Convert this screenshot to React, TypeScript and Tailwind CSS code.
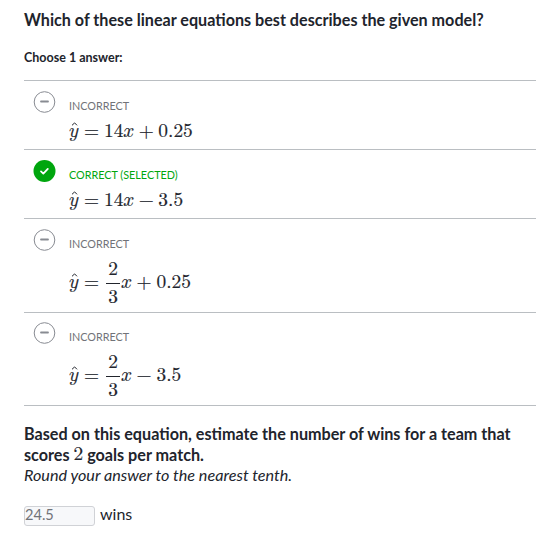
import React from "react";

const MATH = "font-['Latin_Modern_Math','Liberation_Serif',serif] text-[19.36px] leading-[24px] text-[#21242c] [-webkit-text-stroke:0.2px_#21242c]";

function YHat() {
  return (
    <span className="relative inline-block w-[10px]">
      <span className="inline-block [text-transform:math-auto]">y</span>
      <svg className="absolute left-[2px] top-[3px]" width="7" height="4" viewBox="0 0 7 4" fill="none" stroke="#21242c" strokeWidth="1">
        <path d="M1 3.3 3.6 0.9 6 3.3" />
      </svg>
    </span>
  );
}

function Equation({ fraction, op, constant }: { fraction?: boolean; op: string; constant: string }) {
  return (
    <div className={`flex items-center whitespace-nowrap ${fraction ? "h-[52px]" : "h-[24px]"} ${MATH}`}>
      <YHat />
      <span className="ml-[5px] w-[15px]">=</span>
      {fraction ? (
        <span className="ml-[7px] flex w-[14px] flex-col items-center pt-[2px]">
          <span className="h-[27px] leading-[26px]">2</span>
          <span className="h-px w-full bg-[#21242c]" />
          <span className="h-[26px] leading-[27px]">3</span>
        </span>
      ) : (
        <span className="ml-[5px]">14</span>
      )}
      <span className={`w-[11px] [text-transform:math-auto] ${fraction ? "ml-[1px]" : ""}`}>x</span>
      <span className="ml-[4.5px] w-[15px]">{op}</span>
      <span className={fraction ? "ml-[5px]" : "ml-[4.5px]"}>{constant}</span>
    </div>
  );
}

function Choice({ correct, fraction, op, constant, height }: { correct?: boolean; fraction?: boolean; op: string; constant: string; height: string }) {
  return (
    <li className={`flex border-b border-[#babec2] pl-[9px] ${height}`}>
      <svg width="23" height="23" viewBox="0 0 23 23" fill="none" className="shrink-0">
        {correct ? (
          <>
            <circle cx="11.5" cy="11" r="11" fill="#00a60e" />
            <path d="m8 11.4 2.3 2.2 4.5-4.7" stroke="white" strokeWidth="1.8" strokeLinecap="round" strokeLinejoin="round" />
          </>
        ) : (
          <>
            <circle cx="11.5" cy="11" r="10.3" stroke="#888b92" strokeWidth="1" />
            <path d="M8 10.5h7" stroke="#888b92" strokeWidth="1.8" strokeLinecap="round" />
          </>
        )}
      </svg>
      <div className="ml-[13px] pt-[7px]">
        <div className={`text-[10.8px] leading-[16px] ${correct ? "text-[#00a60e]" : "text-[#717378]"}`}>
          {correct ? "CORRECT (SELECTED)" : "INCORRECT"}
        </div>
        <div className={fraction ? "pt-[4px]" : "pt-[5px]"}>
          <Equation fraction={fraction} op={op} constant={constant} />
        </div>
      </div>
    </li>
  );
}

export default function App() {
  return (
    <main className="h-[534px] w-[536px] overflow-hidden bg-white pl-6 pt-[9px] font-['Lato',sans-serif] text-[#21242c]">
      <h1 className="whitespace-nowrap text-[16.15px] font-bold leading-[22px]">
        Which of these linear equations best describes the given model?
      </h1>
      <div className="mt-[18px] text-[12.5px] font-bold leading-[18px]">Choose 1 answer:</div>
      <ul className="mt-[13px] border-t border-[#babec2]">
        <Choice op="+" constant="0.25" height="h-[69px] pt-[10px]" />
        <Choice correct op="−" constant="3.5" height="h-[69px] pt-[10px]" />
        <Choice fraction op="+" constant="0.25" height="h-[94px] pt-[10px]" />
        <Choice fraction op="−" constant="3.5" height="h-[93px] pt-[9px]" />
      </ul>
      <div className="mt-[17px] whitespace-nowrap text-[16.18px] leading-[21px]">
        <p className="font-bold">Based on this equation, estimate the number of wins for a team that</p>
        <p className="flex h-[20px] items-center font-bold">
          <span className="whitespace-pre">scores </span>
          <span className="font-['Latin_Modern_Math','Liberation_Serif',serif] text-[19.36px] font-normal leading-[20px] [-webkit-text-stroke:0.2px_#21242c]">2</span>
          <span className="whitespace-pre"> goals per match.</span>
        </p>
        <p className="italic">Round your answer to the nearest tenth.</p>
      </div>
      <div className="mt-[20px] flex h-[21px] items-center gap-[5px] text-[16px]">
        <input
          readOnly
          value="24.5"
          className="h-5 w-[71px] rounded-[3px] border border-[#d0d2d6] bg-[#f7f8fa] p-0 pb-[2px] text-[14.6px] leading-[16px] text-[#717378] outline-none"
        />
        <span className="-mt-[3px] leading-[20px]">wins</span>
      </div>
    </main>
  );
}
